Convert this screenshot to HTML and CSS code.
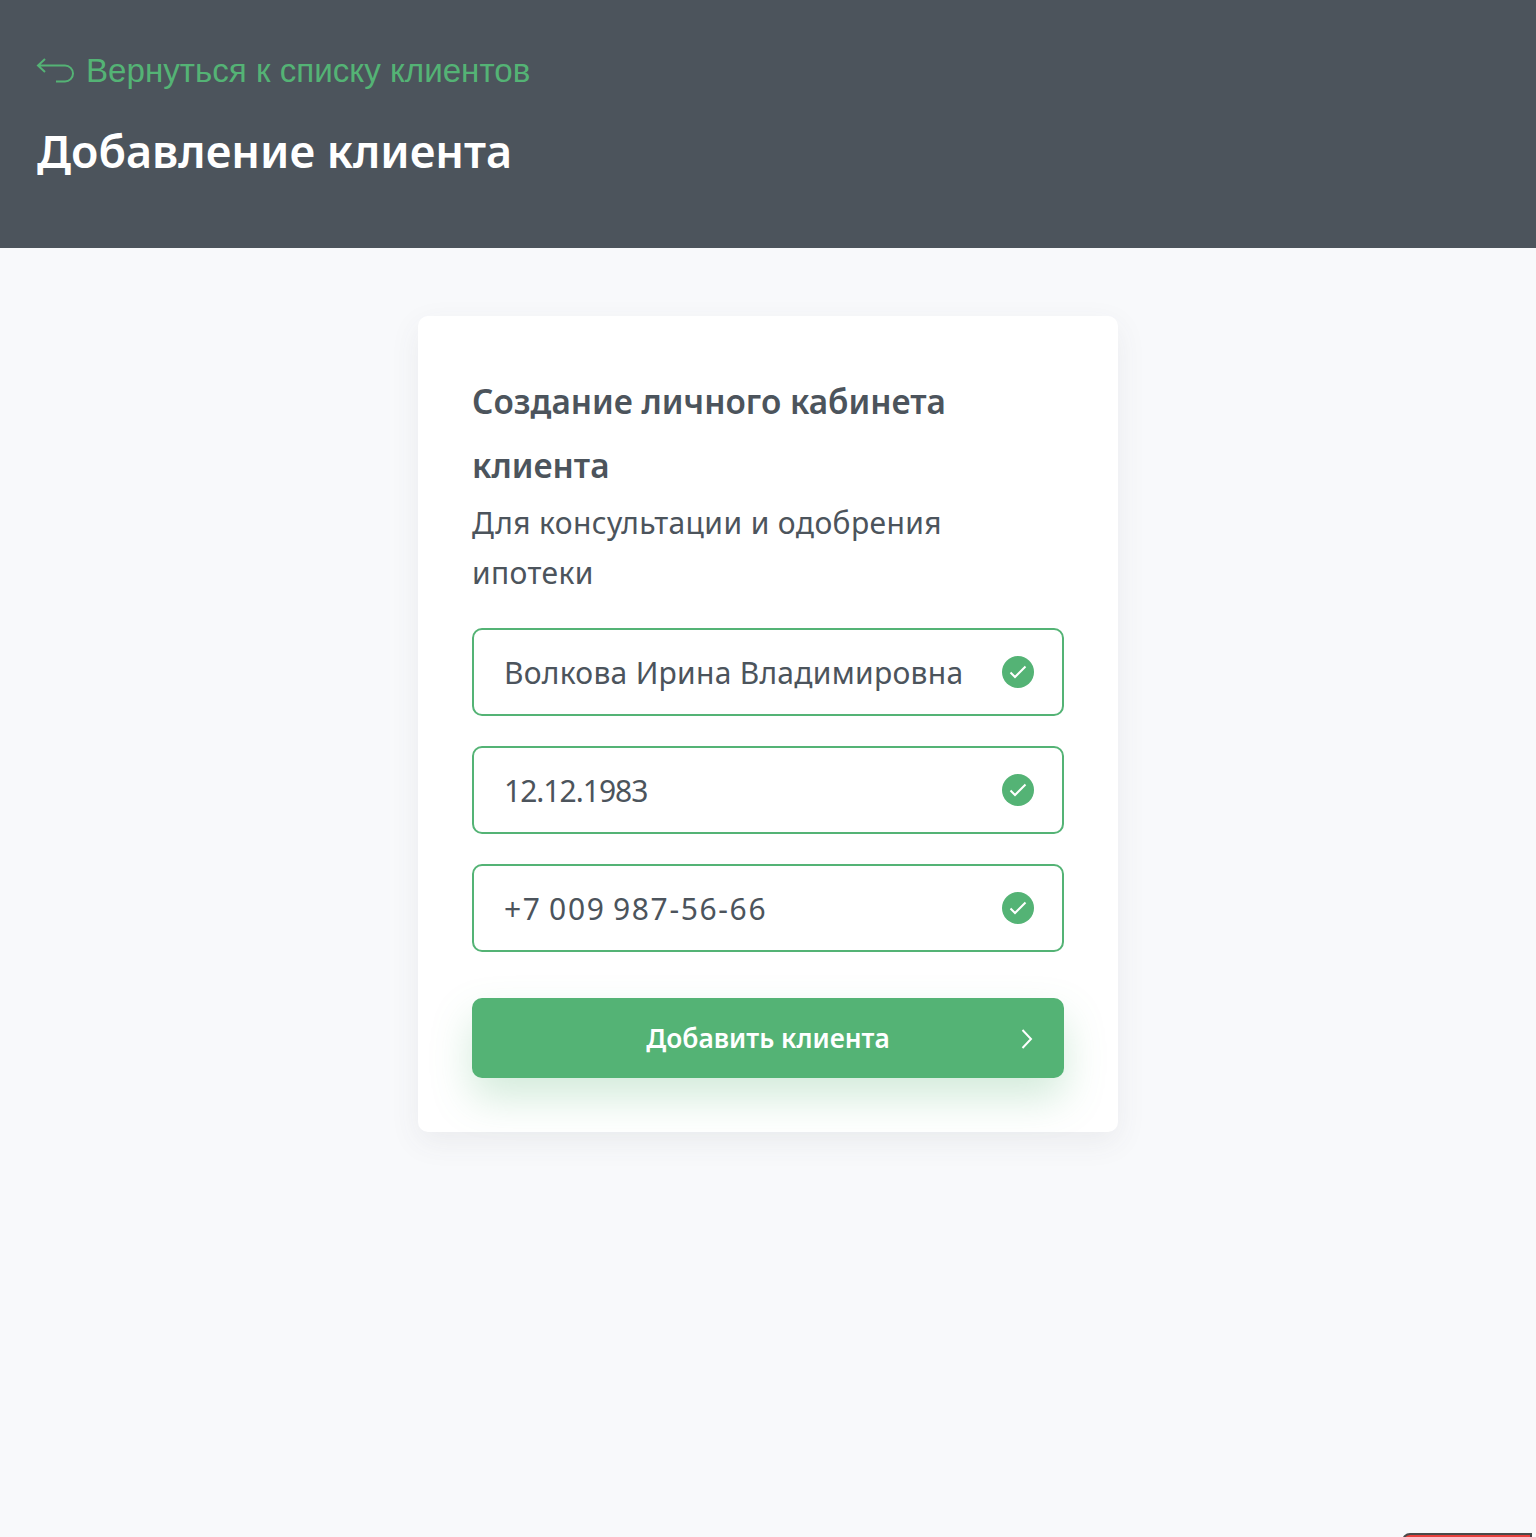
FILE: index.html
```html
<!DOCTYPE html>
<html lang="ru">

<head>
  <meta charset="utf-8">
  <title>Добавление клиента</title>
  <link rel="stylesheet" href="styles.css">
</head>

<body>
  <header class="header">
    <a class="back-link" href="#">
      <svg class="back-icon" width="38" height="26" viewBox="0 0 38 26" fill="none">
        <path d="M9 1 2 7.5 9 14M2 7.5H29a8 8 0 0 1 0 16H20" stroke="#54b375" stroke-width="2" />
      </svg>
      <span>Вернуться к списку клиентов</span>
    </a>
    <h1>Добавление клиента</h1>
  </header>

  <main class="content">
    <form class="card">
      <h2>Создание личного кабинета клиента</h2>
      <p class="subtitle">Для консультации и одобрения ипотеки</p>

      <div class="field">
        <span class="field-name">Волкова Ирина Владимировна</span>
        <svg class="check" width="32" height="32" viewBox="0 0 32 32">
          <circle cx="16" cy="16" r="16" fill="#54b375" />
          <path d="M8.5 16.5 13 21 23.5 10.5" fill="none" stroke="#fff" stroke-width="2" />
        </svg>
      </div>
      <div class="field">
        <span class="field-date">12.12.1983</span>
        <svg class="check" width="32" height="32" viewBox="0 0 32 32">
          <circle cx="16" cy="16" r="16" fill="#54b375" />
          <path d="M8.5 16.5 13 21 23.5 10.5" fill="none" stroke="#fff" stroke-width="2" />
        </svg>
      </div>
      <div class="field">
        <span class="field-phone">+7 009 987-56-66</span>
        <svg class="check" width="32" height="32" viewBox="0 0 32 32">
          <circle cx="16" cy="16" r="16" fill="#54b375" />
          <path d="M8.5 16.5 13 21 23.5 10.5" fill="none" stroke="#fff" stroke-width="2" />
        </svg>
      </div>

      <button class="submit-btn" type="button">
        <span>Добавить клиента</span>
        <svg class="arrow" width="12" height="20" viewBox="0 0 12 20" fill="none">
          <path d="M1.5 1 10 10 1.5 19" stroke="#fff" stroke-width="2" />
        </svg>
      </button>
    </form>
  </main>

  <div class="corner-tab"></div>
</body>

</html>
```

FILE: styles.css
```css
* {
  margin: 0;
  padding: 0;
  box-sizing: border-box;
}

html,
body {
  height: 1537px;
  overflow: hidden;
}

body {
  position: relative;
  font-family: "Noto Sans", "Open Sans", sans-serif;
  color: #4c545c;
  background-color: #f8f9fb;
}

.header {
  height: 248px;
  padding: 51px 36px 0;
  background-color: #4c545c;
}

.back-link {
  display: flex;
  align-items: center;
  gap: 12px;
  height: 40px;
  font-family: "Liberation Sans", Arial, sans-serif;
  font-size: 33.15px;
  line-height: 40px;
  color: #54b375;
  text-decoration: none;
}

.back-icon {
  flex: none;
}

.header h1 {
  margin: 28px 0 0 1px;
  font-size: 44.9px;
  font-weight: 600;
  line-height: 64px;
  color: #fff;
}

.content {
  display: flex;
  justify-content: center;
  padding-top: 68px;
}

.card {
  width: 700px;
  padding: 54px;
  border-radius: 10px;
  background-color: #fff;
  box-shadow: 0 10px 30px rgba(72, 79, 86, 0.08);
}

.card h2 {
  margin: -1px 0 1px;
  font-size: 33.3px;
  font-weight: 600;
  line-height: 64px;
}

.subtitle {
  max-width: 500px;
  margin-bottom: 30px;
  font-size: 30px;
  line-height: 50px;
  letter-spacing: 0.4px;
}

.field {
  display: flex;
  align-items: center;
  justify-content: space-between;
  height: 88px;
  margin-bottom: 30px;
  padding: 0 28px 0 30px;
  font-size: 30px;
  border: 2px solid #54b375;
  border-radius: 10px;
}

.field-name {
  letter-spacing: 0.27px;
}

.field-date {
  letter-spacing: -1px;
}

.field-phone {
  letter-spacing: 1.65px;
  word-spacing: -2px;
}

.check {
  flex: none;
}

.submit-btn {
  position: relative;
  display: block;
  width: 100%;
  height: 80px;
  margin-top: 46px;
  font-family: inherit;
  font-size: 26.3px;
  font-weight: 600;
  color: #fff;
  border: none;
  border-radius: 10px;
  background-color: #54b375;
  box-shadow: 0 20px 40px rgba(84, 179, 117, 0.26);
}

.arrow {
  position: absolute;
  top: 31px;
  right: 31px;
}

.corner-tab {
  position: absolute;
  top: 1533px;
  right: 4px;
  width: 130px;
  height: 20px;
  border: 2px solid #4a4a4a;
  border-radius: 8px 0 0 0;
  background-color: #e8403c;
}
```
